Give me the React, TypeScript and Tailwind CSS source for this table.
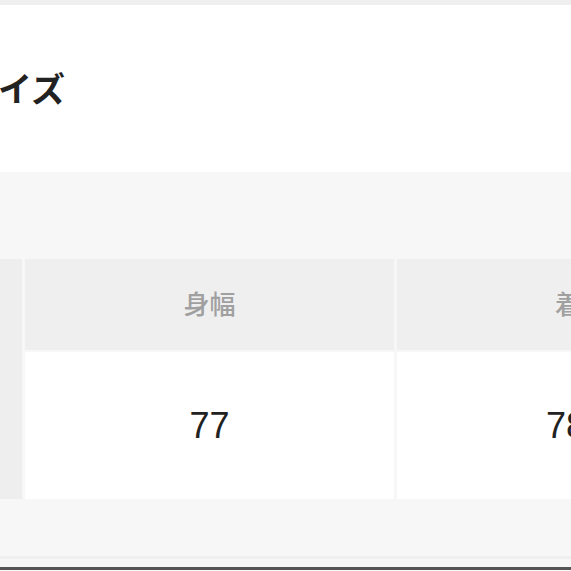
import React from "react";

const jp = { fontFamily: '"Noto Sans CJK JP", "Noto Sans", sans-serif' };

const columns = [
  { label: "身幅", value: "77" },
  { label: "着丈", value: "78.5" },
];

const SizeTable: React.FC = () => {
  return (
    <div className="grid grid-cols-[22px_369px_368px] grid-rows-[91px_147px] gap-x-[3px] gap-y-[2px] w-[800px]">
      <div className="row-span-2 bg-[#eeeeee]" />
      {columns.map((col) => (
        <div
          key={col.label}
          className="flex items-center justify-center pb-[5px] bg-[#efefef] text-[26px] font-medium text-[#a0a0a0]"
          style={jp}
        >
          {col.label}
        </div>
      ))}
      {columns.map((col) => (
        <div
          key={col.value}
          className="flex items-center justify-center bg-white text-[36px] text-[#222222] font-['Liberation_Sans',Arial,sans-serif]"
        >
          {col.value}
        </div>
      ))}
    </div>
  );
};

export default function App() {
  return (
    <div className="w-[571px] h-[571px] overflow-hidden bg-[#f7f7f7] flex flex-col">
      <div className="h-[5px] bg-[#efefef] shrink-0" />
      <div className="h-[167px] bg-white shrink-0 flex items-center">
        <h1
          className="ml-[-36px] mt-[-2px] text-[34px] font-bold text-[#222222] leading-none whitespace-nowrap"
          style={jp}
        >
          サイズ
        </h1>
      </div>
      <div className="h-[87px] shrink-0" />
      <div className="shrink-0 overflow-hidden">
        <SizeTable />
      </div>
      <div className="h-[57px] shrink-0" />
      <div className="h-[3px] bg-[#efefef] shrink-0" />
      <div className="h-[8px] shrink-0" />
      <div className="h-[3px] bg-[#555555] shrink-0" />
    </div>
  );
}
